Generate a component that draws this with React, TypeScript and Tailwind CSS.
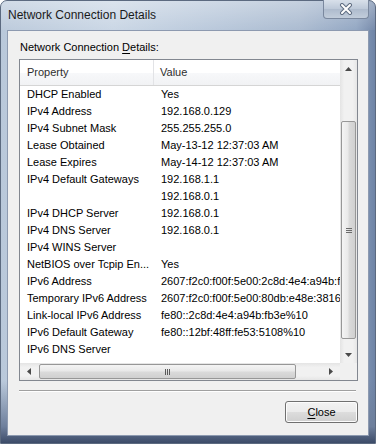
import React from "react";

const rows: [string, string][] = [
  ["DHCP Enabled", "Yes"],
  ["IPv4 Address", "192.168.0.129"],
  ["IPv4 Subnet Mask", "255.255.255.0"],
  ["Lease Obtained", "May-13-12 12:37:03 AM"],
  ["Lease Expires", "May-14-12 12:37:03 AM"],
  ["IPv4 Default Gateways", "192.168.1.1"],
  ["", "192.168.0.1"],
  ["IPv4 DHCP Server", "192.168.0.1"],
  ["IPv4 DNS Server", "192.168.0.1"],
  ["IPv4 WINS Server", ""],
  ["NetBIOS over Tcpip En...", "Yes"],
  ["IPv6 Address", "2607:f2c0:f00f:5e00:2c8d:4e4:a94b:fb3e"],
  ["Temporary IPv6 Address", "2607:f2c0:f00f:5e00:80db:e48e:3816:c3a1"],
  ["Link-local IPv6 Address", "fe80::2c8d:4e4:a94b:fb3e%10"],
  ["IPv6 Default Gateway", "fe80::12bf:48ff:fe53:5108%10"],
  ["IPv6 DNS Server", ""],
];

function Arrow({ dir }: { dir: "up" | "down" | "left" | "right" }) {
  const pts =
    dir === "up"
      ? "0,4 7,4 3.5,0"
      : dir === "down"
      ? "0,0 7,0 3.5,4"
      : dir === "left"
      ? "4,0 4,7 0,3.5"
      : "0,0 0,7 4,3.5";
  const w = dir === "up" || dir === "down" ? 7 : 4;
  const h = dir === "up" || dir === "down" ? 4 : 7;
  return (
    <svg width={w} height={h} viewBox={`0 0 ${w} ${h}`}>
      <polygon points={pts} fill="#4a4a4a" />
    </svg>
  );
}

export default function App() {
  return (
    <div
      className="w-[376px] h-[444px] flex flex-col rounded-t-[7px] border border-[#5c6a80] bg-[linear-gradient(to_right,#b9c8da,#c8d5e4_30%,#b4c4d8_60%,#a7b8ce_80%,#8ea3c0_95%,#6f84a6)]"
      style={{ fontFamily: '"Liberation Sans", Arial, sans-serif' }}
    >
      {/* Title bar */}
      <div className="h-[29px] flex items-start justify-between pl-[7px] pr-[6px] bg-[linear-gradient(to_bottom,rgba(255,255,255,0.35),rgba(255,255,255,0.05))] rounded-t-[6px]">
        <div className="pt-[7px] text-[12px] leading-[14px] text-[#1a1a1a]">
          Network Connection Details
        </div>
        <div className="w-[46px] h-[19px] -mt-[1px] flex items-center justify-center rounded-b-[4px] border border-t-0 border-[#7a889e] bg-[linear-gradient(to_bottom,#d8e0ea,#bcc8d8_50%,#aebbcd_51%,#c2cddb)]">
          <svg width="14" height="12" viewBox="0 0 14 12">
            <path d="M3 2 L11 10 M11 2 L3 10" stroke="#5f6d82" strokeWidth="4" strokeLinecap="round" />
            <path d="M3 2 L11 10 M11 2 L3 10" stroke="#ffffff" strokeWidth="2" strokeLinecap="round" />
          </svg>
        </div>
      </div>

      {/* Body with side frames */}
      <div className="flex-1 flex px-[6px] pb-[7px] bg-[linear-gradient(to_bottom,transparent_85%,#6e7f9c_96%,#3c4b68)]">
        <div className="flex-1 flex flex-col border border-[#8d9ab0] bg-[#f0f0f0] pl-[11px] pr-[10px]">
          <div className="mt-[10px] ml-[1px] h-[13px] text-[11px] leading-[13px] text-black">
            Network Connection <span className="underline underline-offset-[2px]">D</span>etails:
          </div>

          {/* List box */}
          <div className="mt-[5px] h-[322px] border border-[#828790] bg-white grid grid-cols-[1fr_17px] grid-rows-[1fr_17px] overflow-hidden">
            <div className="overflow-hidden flex flex-col text-[11px] text-black">
              <div className="h-[26px] shrink-0 flex border-b border-[#d5d5d5] bg-[linear-gradient(to_bottom,#ffffff,#ffffff_50%,#f7f8fa_51%,#f1f2f4)]">
                <div className="w-[134px] shrink-0 pl-[7px] flex items-center border-r border-[#e2e3e6] text-[#2e2e2e]">
                  Property
                </div>
                <div className="pl-[6px] flex items-center text-[#2e2e2e]">Value</div>
              </div>
              {rows.map(([p, v], i) => (
                <div key={i} className="h-[17px] shrink-0 flex items-center whitespace-nowrap">
                  <div className="w-[135px] shrink-0 pl-[7px] overflow-hidden">{p}</div>
                  <div className="pl-[6px]">{v}</div>
                </div>
              ))}
            </div>

            {/* Vertical scrollbar */}
            <div className="flex flex-col bg-[linear-gradient(to_right,#e4e4e4,#f1f1f1_25%,#f1f1f1_75%,#e6e6e6)]">
              <div className="h-[17px] flex items-center justify-center">
                <Arrow dir="up" />
              </div>
              <div className="h-[44px]" />
              <div className="h-[218px] mx-[1px] rounded-[2px] border border-[#979797] bg-[linear-gradient(to_right,#f4f4f4,#e9e9e9_45%,#dadada_55%,#d0d0d0)] flex items-center justify-center">
                <div className="flex flex-col gap-[1px]">
                  <div className="w-[6px] h-[1px] bg-[#6a6a6a]" />
                  <div className="w-[6px] h-[1px] bg-[#6a6a6a]" />
                  <div className="w-[6px] h-[1px] bg-[#6a6a6a]" />
                </div>
              </div>
              <div className="flex-1 flex items-end justify-center pb-[6px]">
                <Arrow dir="down" />
              </div>
            </div>

            {/* Horizontal scrollbar */}
            <div className="flex items-center bg-[linear-gradient(to_bottom,#e4e4e4,#f1f1f1_25%,#f1f1f1_75%,#e6e6e6)]">
              <div className="w-[17px] flex items-center justify-center pl-[1px]">
                <Arrow dir="left" />
              </div>
              <div className="w-[2px]" />
              <div className="w-[257px] h-[15px] rounded-[2px] border border-[#979797] bg-[linear-gradient(to_bottom,#f4f4f4,#e9e9e9_45%,#dadada_55%,#d0d0d0)] flex items-center justify-center">
                <div className="flex gap-[1px]">
                  <div className="w-[1px] h-[6px] bg-[#5a5a5a]" />
                  <div className="w-[1px] h-[6px] bg-[#5a5a5a]" />
                  <div className="w-[1px] h-[6px] bg-[#5a5a5a]" />
                </div>
              </div>
              <div className="flex-1 flex items-center justify-end pr-[7px]">
                <Arrow dir="right" />
              </div>
            </div>
            <div className="bg-[#f0f0f0]" />
          </div>

          {/* Separator */}
          <div className="mt-[9px] mr-[2px] h-[2px] border-t border-[#a0a0a0] border-b border-b-white" />

          {/* Close button */}
          <div className="mt-[9px] flex justify-end">
            <div className="w-[73px] h-[22px] rounded-[3px] border border-[#707070] bg-[linear-gradient(to_bottom,#f2f2f2,#ebebeb_50%,#dddddd_51%,#cfcfcf)] flex items-center justify-center text-[11px] text-black shadow-[inset_0_0_0_1px_#fcfcfc]">
              <span>
                <span className="underline underline-offset-[2px]">C</span>lose
              </span>
            </div>
          </div>
        </div>
      </div>
    </div>
  );
}
